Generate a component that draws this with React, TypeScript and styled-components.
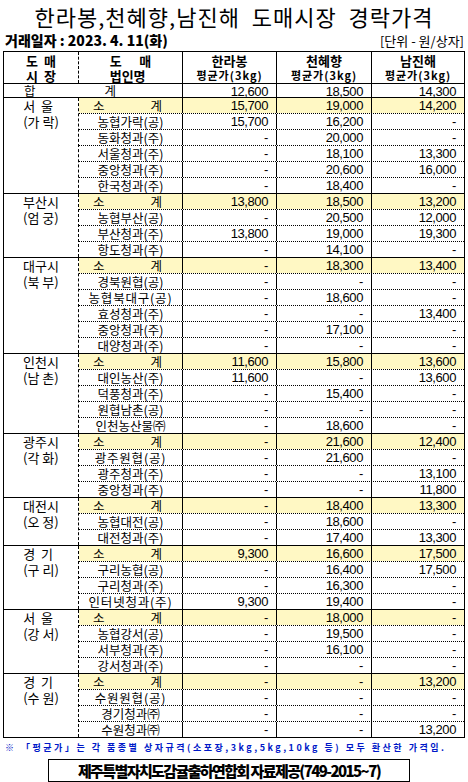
import styled, { createGlobalStyle } from 'styled-components'

const Global = createGlobalStyle`
  body {
    margin: 0;
    background: #fff;
    font-family: 'Noto Sans CJK KR', 'Noto Sans', sans-serif;
    color: #000;
  }
`

const Page = styled.div`
  width: 468px;
  padding-top: 2px;
`
const Title = styled.h1`
  margin: 0;
  height: 28px;
  font-size: 22px;
  font-weight: 400;
  line-height: 28px;
  text-align: center;
  letter-spacing: 1px;
  white-space: pre;
`
const InfoBar = styled.div`
  display: flex;
  justify-content: space-between;
  align-items: center;
  height: 20px;
  padding: 0 4px 0 5px;
`
const TradeDate = styled.span`
  font-size: 14px;
  font-weight: 900;
  white-space: pre;
`
const Unit = styled.span`
  font-size: 13px;
`
const Table = styled.div`
  margin: 1px 0 0 3px;
  width: 462px;
  border: 1px solid #000;
  box-sizing: border-box;
`
const COLS = '75px 104px 94px 95px 92px'
const HeadRow = styled.div`
  display: grid;
  grid-template-columns: ${COLS};
  height: 31px;
`
const HeadCell = styled.div<{ $dashed?: boolean; $last?: boolean }>`
  display: flex;
  flex-direction: column;
  align-items: center;
  justify-content: center;
  font-weight: 700;
  font-size: 13px;
  line-height: 15px;
  border-right: ${(p) => (p.$last ? 'none' : p.$dashed ? '1px dashed #000' : '1px solid #000')};
  white-space: pre;
`
const SubHead = styled.span`
  font-size: 11px;
  line-height: 14px;
  letter-spacing: 1px;
`
const TotalRow = styled.div`
  display: grid;
  grid-template-columns: 179px 94px 95px 92px;
  height: 13px;
  border-top: 1px solid #000;
  font-size: 12.5px;
  line-height: 13px;
`
const TotalLabel = styled.div`
  display: flex;
  padding-left: 20px;
  gap: 69px;
  border-right: 1px solid #000;
`
const Group = styled.div`
  display: grid;
  grid-template-columns: 75px 1fr;
  border-top: 1px solid #000;
`
const Market = styled.div`
  border-right: 1px dashed #000;
  display: flex;
  flex-direction: column;
  align-items: center;
  font-size: 13px;
  line-height: 16px;
  white-space: pre;
`
const Rows = styled.div`
  display: flex;
  flex-direction: column;
`
const Row = styled.div<{ $sub?: boolean; $first?: boolean }>`
  display: grid;
  grid-template-columns: 104px 94px 95px 92px;
  height: ${(p) => (p.$first ? '15px' : '16px')};
  box-sizing: border-box;
  border-top: ${(p) => (p.$first ? 'none' : '1px dotted #000')};
  background: ${(p) => (p.$sub ? '#fff8c4' : 'transparent')};
  font-size: 12.5px;
  line-height: 15px;
`
const Name = styled.div<{ $wide?: boolean }>`
  text-align: center;
  border-right: 1px solid #000;
  letter-spacing: ${(p) => (p.$wide ? '0.8px' : '0')};
  white-space: nowrap;
  line-height: 15px;
`
const SubName = styled.div`
  display: flex;
  justify-content: space-between;
  padding: 0 20px 0 14px;
  border-right: 1px solid #000;
`
const Num = styled.div<{ $last?: boolean }>`
  text-align: right;
  padding-right: 8px;
  font-family: 'Liberation Sans', Arial, sans-serif;
  font-size: 13px;
  line-height: 15px;
  letter-spacing: -0.4px;
  border-right: ${(p) => (p.$last ? 'none' : '1px solid #000')};
`
const Note = styled.div`
  margin: 4px 0 0 5px;
  font-size: 9px;
  font-weight: 700;
  color: #0018c8;
  letter-spacing: 2.5px;
  line-height: 12px;
  white-space: pre;
`
const Credit = styled.div`
  margin: 5px 0 0 48px;
  width: 362px;
  height: 23px;
  box-sizing: border-box;
  border: 1px solid #000;
  display: flex;
  align-items: center;
  justify-content: center;
  font-size: 15px;
  font-weight: 900;
  letter-spacing: -1.6px;
`

type Line = [string, string, string, string, boolean?]
const GROUPS: { label: string[]; rows: Line[] }[] = [
  {
    label: ['서  울', '(가 락)'],
    rows: [
      ['소계', '15,700', '19,000', '14,200'],
      ['농협가락(공)', '15,700', '16,200', '-'],
      ['동화청과(주)', '-', '20,000', '-'],
      ['서울청과(주)', '-', '18,100', '13,300'],
      ['중앙청과(주)', '-', '20,600', '16,000'],
      ['한국청과(주)', '-', '18,400', '-'],
    ],
  },
  {
    label: ['부산시', '(엄 궁)'],
    rows: [
      ['소계', '13,800', '18,500', '13,200'],
      ['농협부산(공)', '-', '20,500', '12,000'],
      ['부산청과(주)', '13,800', '19,000', '19,300'],
      ['항도청과(주)', '-', '14,100', '-'],
    ],
  },
  {
    label: ['대구시', '(북 부)'],
    rows: [
      ['소계', '-', '18,300', '13,400'],
      ['경북원협(공)', '-', '-', '-'],
      ['농협북대구(공)', '-', '18,600', '-', true],
      ['효성청과(주)', '-', '-', '13,400'],
      ['중앙청과(주)', '-', '17,100', '-'],
      ['대양청과(주)', '-', '-', '-'],
    ],
  },
  {
    label: ['인천시', '(남 촌)'],
    rows: [
      ['소계', '11,600', '15,800', '13,600'],
      ['대인농산(주)', '11,600', '-', '13,600'],
      ['덕풍청과(주)', '-', '15,400', '-'],
      ['원협남촌(공)', '-', '-', '-'],
      ['인천농산물㈜', '-', '18,600', '-'],
    ],
  },
  {
    label: ['광주시', '(각 화)'],
    rows: [
      ['소계', '-', '21,600', '12,400'],
      ['광주원협(공)', '-', '21,600', '-', true],
      ['광주청과(주)', '-', '-', '13,100'],
      ['중앙청과(주)', '-', '-', '11,800'],
    ],
  },
  {
    label: ['대전시', '(오 정)'],
    rows: [
      ['소계', '-', '18,400', '13,300'],
      ['농협대전(공)', '-', '18,600', '-'],
      ['대전청과(주)', '-', '17,400', '13,300'],
    ],
  },
  {
    label: ['경  기', '(구 리)'],
    rows: [
      ['소계', '9,300', '16,600', '17,500'],
      ['구리농협(공)', '-', '16,400', '17,500'],
      ['구리청과(주)', '-', '16,300', '-'],
      ['인터넷청과(주)', '9,300', '19,400', '-', true],
    ],
  },
  {
    label: ['서  울', '(강 서)'],
    rows: [
      ['소계', '-', '18,000', '-'],
      ['농협강서(공)', '-', '19,500', '-'],
      ['서부청과(주)', '-', '16,100', '-'],
      ['강서청과(주)', '-', '-', '-'],
    ],
  },
  {
    label: ['경  기', '(수 원)'],
    rows: [
      ['소계', '-', '-', '13,200'],
      ['수원원협(공)', '-', '-', '-', true],
      ['경기청과㈜', '-', '-', '-'],
      ['수원청과㈜', '-', '-', '13,200'],
    ],
  },
]

export default function App() {
  return (
    <Page>
      <Global />
      <Title>{'한라봉,천혜향,남진해  도매시장  경락가격'}</Title>
      <InfoBar>
        <TradeDate>{'거래일자 : 2023. 4. 11(화)'}</TradeDate>
        <Unit>[단위 - 원/상자]</Unit>
      </InfoBar>
      <Table>
        <HeadRow>
          <HeadCell $dashed>{'도  매\n시  장'}</HeadCell>
          <HeadCell>{'도      매\n법인명'}</HeadCell>
          <HeadCell>
            한라봉
            <SubHead>평균가(3kg)</SubHead>
          </HeadCell>
          <HeadCell>
            천혜향
            <SubHead>평균가(3kg)</SubHead>
          </HeadCell>
          <HeadCell $last>
            남진해
            <SubHead>평균가(3kg)</SubHead>
          </HeadCell>
        </HeadRow>
        <TotalRow>
          <TotalLabel>
            <span>합</span>
            <span>계</span>
          </TotalLabel>
          <Num>12,600</Num>
          <Num>18,500</Num>
          <Num $last>14,300</Num>
        </TotalRow>
        {GROUPS.map((g, gi) => (
          <Group key={gi}>
            <Market>{g.label.join('\n')}</Market>
            <Rows>
              {g.rows.map(([name, a, b, c, wide], ri) => (
                <Row key={ri} $sub={ri === 0} $first={ri === 0}>
                  {ri === 0 ? (
                    <SubName>
                      <span>소</span>
                      <span>계</span>
                    </SubName>
                  ) : (
                    <Name $wide={wide}>{name}</Name>
                  )}
                  <Num>{a}</Num>
                  <Num>{b}</Num>
                  <Num $last>{c}</Num>
                </Row>
              ))}
            </Rows>
          </Group>
        ))}
      </Table>
      <Note>{'※ 「평균가」는 각 품종별 상자규격(소포장,3kg,5kg,10kg 등) 모두 환산한 가격임.'}</Note>
      <Credit>제주특별자치도감귤출하연합회 자료제공(749-2015~7)</Credit>
    </Page>
  )
}
